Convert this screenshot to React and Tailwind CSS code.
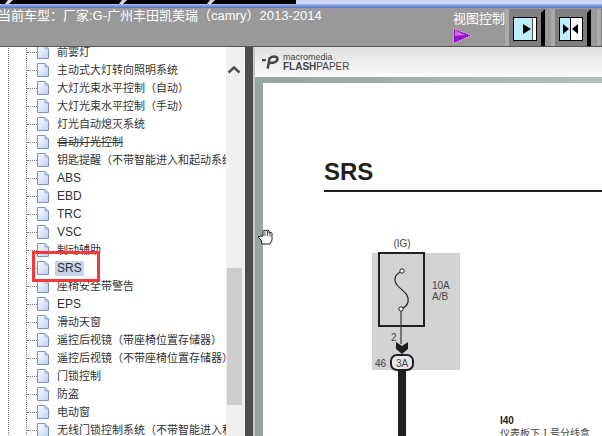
const CJK = '"Noto Sans CJK SC", "Liberation Sans", sans-serif'
const LATIN_CJK = '"Liberation Sans", "Noto Sans CJK SC", sans-serif'

const TREE_ITEMS = [
  '前雾灯',
  '主动式大灯转向照明系统',
  '大灯光束水平控制（自动）',
  '大灯光束水平控制（手动）',
  '灯光自动熄灭系统',
  '自动灯光控制',
  '钥匙提醒（不带智能进入和起动系统）',
  'ABS',
  'EBD',
  'TRC',
  'VSC',
  '制动辅助',
  'SRS',
  '座椅安全带警告',
  'EPS',
  '滑动天窗',
  '遥控后视镜（带座椅位置存储器）',
  '遥控后视镜（不带座椅位置存储器）',
  '门锁控制',
  '防盗',
  '电动窗',
  '无线门锁控制系统（不带智能进入和起动系统）',
]

function PageIcon() {
  return (
    <svg width="12" height="14" viewBox="0 0 12 14" className="shrink-0">
      <defs>
        <linearGradient id="pg" x1="0" y1="0" x2="1" y2="1">
          <stop offset="0" stopColor="#ffffff" />
          <stop offset="1" stopColor="#bcd0f0" />
        </linearGradient>
      </defs>
      <path d="M0.5 0.5H8L11.5 4V13.5H0.5Z" fill="url(#pg)" stroke="#7d8fc4" />
      <path d="M8 0.5V4H11.5" fill="none" stroke="#9aa9d4" />
    </svg>
  )
}

function TopNotch({ className }) {
  return (
    <svg width="8" height="4" viewBox="0 0 8 4" className={`shrink-0 ${className}`}>
      <path d="M3 0H8L4 4H0Z" fill="#d8d8e0" />
    </svg>
  )
}

function ViewButton({ both }) {
  return (
    <div className="relative w-[40px] h-[37px] shrink-0 bg-[#aaaaaa] pl-[4px]">
      <div className="w-full h-full bg-[#7f7f7f] pl-[4px] pt-[8px] pr-[8px] pb-[4px]">
        <div className="w-[24px] h-[24px] border border-black bg-[#bdeeff] flex items-center justify-center overflow-hidden">
          {both ? (
            <svg width="22" height="22" viewBox="0 0 22 22" className="shrink-0">
              <rect x="11" y="0" width="11" height="22" fill="#fff" />
              <rect x="10" y="0" width="1" height="22" fill="#000" />
              <path d="M3 6L9 11L3 16Z M18 6L12 11L18 16Z" fill="#000" />
            </svg>
          ) : (
            <svg width="22" height="22" viewBox="0 0 22 22" className="shrink-0">
              <rect x="19" y="0" width="3" height="22" fill="#fff" />
              <rect x="18" y="0" width="1" height="22" fill="#555" />
              <path d="M9 6L17 11L9 16Z" fill="#000" />
            </svg>
          )}
        </div>
      </div>
      <svg width="4" height="37" viewBox="0 0 4 37" className="absolute right-0 top-0">
        <path d="M4 0V37H0V4Z" fill="#000" />
      </svg>
    </div>
  )
}

function Header() {
  return (
    <div className="shrink-0 h-[47px] flex flex-col">
      <div className="h-[4px] flex bg-[#cfd6f5]">
        <div className="w-[296px] h-full bg-black flex">
          <TopNotch className="ml-[5px]" />
          <TopNotch className="ml-[106px]" />
          <TopNotch className="ml-[80px]" />
        </div>
      </div>
      <div className="h-[4px] bg-gradient-to-b from-[#a9b8e6] to-[#4f74c8]" />
      <div className="flex-1 bg-[#999999] border-b border-[#555555] flex justify-between overflow-hidden">
        <div className="text-white text-[13px] leading-[16px] whitespace-nowrap -ml-[2px]" style={{ fontFamily: LATIN_CJK }}>
          当前车型：厂家:G-广州丰田凯美瑞（camry）2013-2014
        </div>
        <div className="flex shrink-0 gap-[6px] -mr-[35px] pt-[1px]">
          <div className="w-[46px] flex flex-col">
            <span className="text-white text-[13px] leading-[17px] whitespace-nowrap" style={{ fontFamily: CJK }}>
              视图控制
            </span>
            <svg width="19" height="16" viewBox="0 0 19 16" className="mt-[2px]">
              <path d="M0.5 0.5L18.5 7.5L0.5 15.5Z" fill="#9a12c8" stroke="#e9d5f5" strokeDasharray="1 1" />
              <path d="M2 2L12 7L2 8Z" fill="#c86ae0" />
            </svg>
          </div>
          <ViewButton />
          <ViewButton both />
          <ViewButton />
        </div>
      </div>
    </div>
  )
}

function TreeRow({ label }) {
  const selected = label === 'SRS'
  const struck = label === '自动灯光控制'
  const latin = /^[A-Z]+$/.test(label)
  return (
    <div className="h-[18px] flex items-center">
      <div className="w-[10px] shrink-0 border-t border-dotted border-[#777777]" />
      <PageIcon />
      <span
        className={`ml-[6px] px-[2px] leading-[15px] whitespace-nowrap text-[#333333] ${latin ? 'text-[12px]' : 'text-[11px]'} ${selected ? 'bg-[#c5d4ea]' : ''} ${struck ? 'line-through' : ''}`}
        style={{ fontFamily: LATIN_CJK }}
      >
        {label}
      </span>
    </div>
  )
}

function Tree() {
  return (
    <div className="relative w-[226px] shrink-0 bg-white overflow-hidden">
      <div className="ml-[8px] border-l border-dotted border-[#777777] pl-[17px] -mt-[4px]">
        <div className="border-l border-dotted border-[#777777]">
          {TREE_ITEMS.map((item) => (
            <TreeRow key={item} label={item} />
          ))}
        </div>
      </div>
      <div className="absolute left-[32px] top-[204px] w-[68px] h-[31px] border-[3px] border-[#f23a3a]" />
    </div>
  )
}

function Scrollbar() {
  return (
    <div className="w-[19px] shrink-0 bg-[#f0f0f0] flex flex-col pl-[1px] pt-[18px]">
      <svg width="14" height="9" viewBox="0 0 14 9" className="shrink-0">
        <path d="M1.5 7.5L7 2.5L12.5 7.5" fill="none" stroke="#505050" strokeWidth="2.5" />
      </svg>
      <div className="w-[15px] h-[137px] mt-[194px] bg-[#cdcdcd]" />
    </div>
  )
}

function Diagram() {
  const label = { fontSize: 10, fill: '#444', fontFamily: 'Liberation Sans' }
  return (
    <svg width="130" height="200" viewBox="0 0 130 200" className="shrink-0">
      <rect x="32" y="17" width="88" height="117" fill="#d2d3d5" />
      <rect x="39" y="17" width="45" height="73" fill="none" stroke="#231f20" strokeWidth="2" />
      <text x="62" y="11" textAnchor="middle" {...label}>(IG)</text>
      <text x="92" y="53" {...label}>10A</text>
      <text x="92" y="64" {...label}>A/B</text>
      <text x="51" y="105" {...label}>2</text>
      <text x="35" y="131" {...label}>46</text>
      <path d="M61 36C55 38 53 44 57 49C61 54 70 58 68 66C67 70 64 72 62 72" fill="none" stroke="#231f20" strokeWidth="1.2" />
      <circle cx="62" cy="35" r="2.2" fill="#fff" stroke="#231f20" />
      <circle cx="61" cy="73" r="2.2" fill="#fff" stroke="#231f20" />
      <path d="M61 75V108" stroke="#444" strokeWidth="1.3" />
      <path d="M56 106L62 110L68 106V113L62 118L56 113Z" fill="#231f20" />
      <rect x="51" y="119" width="22" height="15" rx="6" fill="#e8e8e8" stroke="#231f20" strokeWidth="2" />
      <text x="62" y="131" textAnchor="middle" {...label}>3A</text>
      <rect x="58" y="135" width="8" height="65" fill="#231f20" />
    </svg>
  )
}

function FlashPaper() {
  return (
    <div className="flex-1 min-w-0 flex flex-col overflow-hidden">
      <div className="h-[30px] shrink-0 bg-gradient-to-b from-[#e0e0e0] to-[#fbfbfb] flex items-center pl-[7px] gap-[4px]">
        <svg width="17" height="14" viewBox="0 0 18 14" className="shrink-0">
          <path d="M0 5H4M6 14L8 3C12 0 18 1 16 5C15 8 11 8 8 8" fill="none" stroke="#444" strokeWidth="2.6" />
        </svg>
        <div className="flex flex-col text-[#444444]" style={{ fontFamily: '"Liberation Sans", sans-serif' }}>
          <span className="text-[9px] leading-[9px]">macromedia</span>
          <span className="text-[10px] leading-[9px] whitespace-nowrap">
            <b>FLASH</b>PAPER
          </span>
        </div>
      </div>
      <div className="flex-1 bg-gradient-to-r from-[#94a5a2] to-[#b4c0be] pl-[8px] pt-[6px]">
        <div className="h-full bg-white pl-[61px] pt-[75px]" style={{ fontFamily: '"Liberation Sans", sans-serif' }}>
          <div className="text-[24px] leading-[28px] font-bold text-[#231f20] border-b-2 border-[#231f20] pb-[4px]">SRS</div>
          <div className="flex mt-[44px]">
            <div className="ml-[16px]">
              <Diagram />
            </div>
            <div className="ml-[30px] pt-[179px] w-[120px] shrink-0">
              <div className="text-[10px] leading-[12px] font-bold text-[#231f20]">I40</div>
              <div className="text-[10px] leading-[12px] text-[#444444] whitespace-nowrap" style={{ fontFamily: CJK }}>
                仪表板下 1 号分线盒
              </div>
            </div>
          </div>
        </div>
      </div>
    </div>
  )
}

export default function App() {
  return (
    <div className="relative w-[602px] h-[436px] flex flex-col overflow-hidden bg-white">
      <Header />
      <div className="flex-1 min-h-0 flex">
        <Tree />
        <Scrollbar />
        <div className="w-[8px] shrink-0 bg-[#4d4d4d]" />
        <div className="w-[2px] shrink-0 bg-[#c8c8c8]" />
        <FlashPaper />
      </div>
      <svg width="18" height="18" viewBox="0 0 18 18" className="absolute left-[257px] top-[228px]">
        <path
          d="M1 9L4 12L5 16H13L15 12V5L13 4L12 5V2.5L10 2L9 3L7 2L6 3.5V8L4 8Z"
          fill="#fff"
          stroke="#222"
          strokeWidth="1"
        />
        <path d="M8 3.5V8M10.5 3V8M13 5V8.5" stroke="#222" strokeWidth="0.8" />
      </svg>
    </div>
  )
}
